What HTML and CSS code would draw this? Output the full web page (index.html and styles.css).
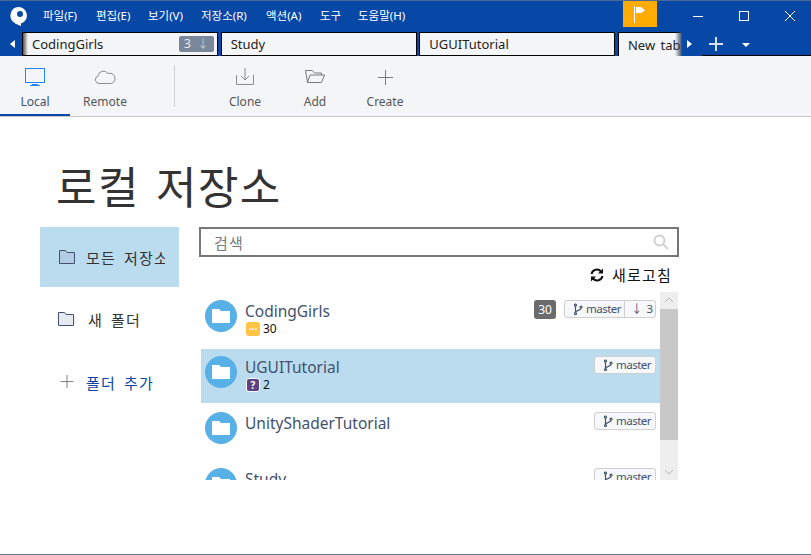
FILE: index.html
```html
<!DOCTYPE html>
<html lang="ko">
<head>
    <meta charset="UTF-8">
    <title>Sourcetree</title>
    <link rel="stylesheet" href="styles.css">
</head>
<body>
    <div class="app">
        <header class="titlebar">
            <svg class="logo" viewBox="0 0 18 19">
                <path fill="#fff" fill-rule="evenodd" d="M8.500 0a8.500 8.500 0 0 1 2.500 16.600V19L5 16.500V16A8.500 8.500 0 0 1 8.500 0zM10 4a3 3 0 1 0 0 6a3 3 0 0 0 0-6z"/>
            </svg>
            <nav class="menu">
                <span class="menu-item w53">파일(F)</span>
                <span class="menu-item w52">편집(E)</span>
                <span class="menu-item w53">보기(V)</span>
                <span class="menu-item w65">저장소(R)</span>
                <span class="menu-item w54">액션(A)</span>
                <span class="menu-item w38">도구</span>
                <span class="menu-item">도움말(H)</span>
            </nav>
            <div class="flag">
                <svg width="14" height="18" viewBox="0 0 14 18">
                    <path stroke="#fff" d="M1.500 1v17"/>
                    <path fill="#fff" d="M3 2h5l4 3.500L8 8H3z"/>
                </svg>
            </div>
            <div class="win-controls">
                <button class="win-btn"><svg width="12" height="12" viewBox="0 0 12 12"><path stroke="#fff" d="M1 6.500h10"/></svg></button>
                <button class="win-btn"><svg width="12" height="12" viewBox="0 0 12 12"><rect x="1.500" y="1.500" width="9" height="9" fill="none" stroke="#fff"/></svg></button>
                <button class="win-btn"><svg width="12" height="12" viewBox="0 0 12 12"><path stroke="#fff" d="M1 1l10 10M11 1L1 11"/></svg></button>
            </div>
        </header>

        <div class="tabbar">
            <div class="tab-arrow tab-arrow-left"></div>
            <div class="tabs">
                <div class="tab">
                    <span class="tab-name">CodingGirls</span>
                    <span class="tab-badge">3 <span class="tab-badge-arrow">↓</span></span>
                </div>
                <div class="tab"><span class="tab-name">Study</span></div>
                <div class="tab"><span class="tab-name">UGUITutorial</span></div>
                <div class="tab tab-active"><span class="tab-name">New tab</span></div>
                <div class="tabs-fade"></div>
            </div>
            <div class="tab-arrow tab-arrow-right"></div>
            <div class="tab-tools">
                <svg width="16" height="16" viewBox="0 0 16 16"><path stroke="#d5e0f0" stroke-width="2" d="M8 1v14M1 8h14"/></svg>
                <span class="tab-caret"></span>
            </div>
        </div>

        <div class="toolbar">
            <div class="tool tool-active">
                <svg width="22" height="20" viewBox="0 0 22 20" fill="none" stroke="#2684ff">
                    <rect x="1.500" y="1.500" width="19" height="14"/>
                    <path d="M8 17.500h6M6 18.500h10"/>
                </svg>
                <span>Local</span>
            </div>
            <div class="tool">
                <svg width="22" height="20" viewBox="0 0 22 20" fill="none" stroke="#8c8c8c">
                    <path d="M5 16.500a3.800 3.800 0 0 1-1-7.400A5.500 5.500 0 0 1 14 6.500a4.500 4.500 0 0 1 3.500 10z"/>
                </svg>
                <span>Remote</span>
            </div>
            <div class="tool-sep"></div>
            <div class="tool">
                <svg width="22" height="20" viewBox="0 0 22 20" fill="none" stroke="#8c8c8c">
                    <path d="M2.500 8v9.500h17V8M11 1v12M7 9l4 4 4-4"/>
                </svg>
                <span>Clone</span>
            </div>
            <div class="tool">
                <svg width="22" height="20" viewBox="0 0 22 20" fill="none" stroke="#7a7a7a">
                    <path d="M3.500 15.500L1.500 3.500h7l2 2.500h7v2M3.500 15.500h14l3-7.500H6z"/>
                </svg>
                <span>Add</span>
            </div>
            <div class="tool">
                <svg width="22" height="20" viewBox="0 0 22 20" fill="none" stroke="#7a7a7a">
                    <path d="M11.500 3v15M4 10.500h15"/>
                </svg>
                <span>Create</span>
            </div>
        </div>

        <main class="content">
            <h1 class="page-title">로컬 저장소</h1>
            <div class="columns">
                <aside class="sidebar">
                    <div class="side-item side-selected">
                        <svg class="side-icon" viewBox="0 0 16 14"><path fill="#b0cde4" stroke="#42526e" d="M.500 13.500V.500h6l1.500 2h7.500v11z"/></svg>
                        <span class="side-label">모든 저장소</span>
                    </div>
                    <div class="side-item side-new">
                        <svg class="side-icon" viewBox="0 0 16 14"><path fill="#e6e9f1" stroke="#42526e" d="M.500 13.500V.500h6l1.500 2h7.500v11z"/></svg>
                        <span class="side-label">새 폴더</span>
                    </div>
                    <div class="side-item side-add">
                        <svg class="side-icon" viewBox="0 0 16 16"><path stroke="#707070" d="M8 0v15M.5 7.500h15"/></svg>
                        <span class="side-label">폴더 추가</span>
                    </div>
                </aside>

                <section class="repos">
                    <div class="search">
                        <span class="search-text">검색</span>
                        <svg width="16" height="16" viewBox="0 0 16 16" fill="none" stroke="#d0d0d0" stroke-width="2">
                            <circle cx="6.500" cy="6.500" r="5"/>
                            <path d="M10 10l5 5"/>
                        </svg>
                    </div>
                    <div class="refresh">
                        <svg width="14" height="14" viewBox="0 0 14 14" fill="none" stroke="#111" stroke-width="2">
                            <path d="M1.500 6A5.500 5.500 0 0 1 11 3.500M12.500 8A5.500 5.500 0 0 1 3 10.500"/>
                            <path fill="#111" stroke="none" d="M13 .5v5H8zM1 13.500v-5h5z"/>
                        </svg>
                        <span>새로고침</span>
                    </div>
                    <div class="repo-area">
                        <div class="repo-list">
                            <div class="repo">
                                <div class="repo-circle"><svg width="18" height="14" viewBox="0 0 18 14"><path fill="#fff" d="M0 14V0h7l2 2h9v12z"/></svg></div>
                                <div class="repo-info">
                                    <div class="repo-name">CodingGirls</div>
                                    <div class="repo-status"><span class="st st-pending">···</span>30</div>
                                </div>
                                <span class="count">30</span>
                                <span class="branch branch-wide">
                                    <svg class="branch-icon" viewBox="0 0 10 12" fill="none" stroke="#42526e" stroke-width="1.200"><circle cx="2.500" cy="2" r="1"/><circle cx="2.500" cy="10.500" r="1"/><circle cx="8" cy="4" r="1"/><path d="M2.500 3v6.500M8 5c0 2.500-4 2-5.500 4"/></svg>
                                    master
                                    <span class="branch-behind">↓ 3</span>
                                </span>
                            </div>
                            <div class="repo repo-selected">
                                <div class="repo-circle"><svg width="18" height="14" viewBox="0 0 18 14"><path fill="#fff" d="M0 14V0h7l2 2h9v12z"/></svg></div>
                                <div class="repo-info">
                                    <div class="repo-name">UGUITutorial</div>
                                    <div class="repo-status"><span class="st st-unknown">?</span>2</div>
                                </div>
                                <span class="branch">
                                    <svg class="branch-icon" viewBox="0 0 10 12" fill="none" stroke="#42526e" stroke-width="1.200"><circle cx="2.500" cy="2" r="1"/><circle cx="2.500" cy="10.500" r="1"/><circle cx="8" cy="4" r="1"/><path d="M2.500 3v6.500M8 5c0 2.500-4 2-5.500 4"/></svg>
                                    master
                                </span>
                            </div>
                            <div class="repo">
                                <div class="repo-circle"><svg width="18" height="14" viewBox="0 0 18 14"><path fill="#fff" d="M0 14V0h7l2 2h9v12z"/></svg></div>
                                <div class="repo-info">
                                    <div class="repo-name">UnityShaderTutorial</div>
                                </div>
                                <span class="branch">
                                    <svg class="branch-icon" viewBox="0 0 10 12" fill="none" stroke="#42526e" stroke-width="1.200"><circle cx="2.500" cy="2" r="1"/><circle cx="2.500" cy="10.500" r="1"/><circle cx="8" cy="4" r="1"/><path d="M2.500 3v6.500M8 5c0 2.500-4 2-5.500 4"/></svg>
                                    master
                                </span>
                            </div>
                            <div class="repo">
                                <div class="repo-circle"><svg width="18" height="14" viewBox="0 0 18 14"><path fill="#fff" d="M0 14V0h7l2 2h9v12z"/></svg></div>
                                <div class="repo-info">
                                    <div class="repo-name">Study</div>
                                </div>
                                <span class="branch">
                                    <svg class="branch-icon" viewBox="0 0 10 12" fill="none" stroke="#42526e" stroke-width="1.200"><circle cx="2.500" cy="2" r="1"/><circle cx="2.500" cy="10.500" r="1"/><circle cx="8" cy="4" r="1"/><path d="M2.500 3v6.500M8 5c0 2.500-4 2-5.500 4"/></svg>
                                    master
                                </span>
                            </div>
                        </div>
                        <div class="scrollbar">
                            <svg class="scroll-btn" viewBox="0 0 18 17" fill="none" stroke="#b5b5b5"><path d="M5 10l4-4 4 4"/></svg>
                            <div class="scroll-thumb"></div>
                            <svg class="scroll-btn scroll-btn-down" viewBox="0 0 18 17" fill="none" stroke="#b5b5b5"><path d="M5 7l4 4 4-4"/></svg>
                        </div>
                    </div>
                </section>
            </div>
        </main>
    </div>
</body>
</html>
```

FILE: styles.css
```css
* {
    margin: 0;
    padding: 0;
    box-sizing: border-box;
}

body {
    font-family: 'Noto Sans', 'Noto Sans CJK KR', sans-serif;
    background: #FFFFFF;
    color: #333333;
    overflow: hidden;
}

.app {
    width: 811px;
    height: 555px;
    display: flex;
    flex-direction: column;
    border-bottom: 1px solid #5B7A94;
    overflow: hidden;
}

/* Title bar */
.titlebar {
    height: 32px;
    flex: none;
    display: flex;
    background: #0747A6;
    border-top: 1px solid #4A6A94;
}

.logo {
    width: 18px;
    height: 19px;
    flex: none;
    margin: 6px 0 0 10px;
}

.menu {
    display: flex;
    flex: none;
    margin-left: 15px;
    width: 580px;
    color: #FFFFFF;
    font-size: 11.500px;
    line-height: 29px;
}

.menu-item {
    white-space: nowrap;
}

.w53 { width: 53px; }
.w52 { width: 52px; }
.w65 { width: 65px; }
.w54 { width: 54px; }
.w38 { width: 38px; }

.flag {
    width: 34px;
    height: 26px;
    flex: none;
    background: #FFAB00;
    display: flex;
    justify-content: center;
    padding-top: 4px;
}

.win-controls {
    display: flex;
    flex: none;
    margin-left: 18px;
}

.win-btn {
    width: 46px;
    height: 31px;
    border: none;
    background: none;
    display: flex;
    align-items: center;
    justify-content: center;
    padding-bottom: 2px;
}

/* Tabs */
.tabbar {
    height: 24px;
    flex: none;
    display: flex;
    background: #0747A6;
}

.tab-arrow {
    width: 0;
    height: 0;
    margin-top: 8px;
    border-top: 4px solid transparent;
    border-bottom: 4px solid transparent;
}

.tab-arrow-left {
    margin-left: 10px;
    border-right: 5px solid #FFFFFF;
}

.tab-arrow-right {
    margin-left: 5px;
    border-left: 5px solid #FFFFFF;
}

.tabs {
    width: 660px;
    margin-left: 7px;
    display: flex;
    gap: 2.670px;
    overflow: hidden;
    position: relative;
}

/* scroll shadow where the last tab runs under the arrow */
.tabs-fade {
    position: absolute;
    top: 0;
    right: 0;
    width: 7px;
    height: 24px;
    background: linear-gradient(90deg, rgba(7, 71, 166, 0), #3A4A66);
}

.tab {
    width: 196px;
    height: 24px;
    flex: none;
    display: flex;
    align-items: center;
    justify-content: space-between;
    padding: 0 3px 0 9px;
    background: #F4F5F7;
    border: 1px solid #000000;
    font-size: 13px;
    color: #222222;
}

.tab:first-child {
    background: linear-gradient(90deg, #555555, #F4F5F7 5px);
}

.tab-active {
    border-bottom: none;
    background: #F4F5F7;
}

.tab-name {
    white-space: nowrap;
    word-spacing: 2px;
}

.tab-badge {
    background: #7A869A;
    color: #E8EAEE;
    font-size: 12px;
    line-height: 16px;
    height: 16px;
    padding: 0 5px;
    border-radius: 2px;
    word-spacing: 3px;
}

.tab-badge-arrow {
    color: #C1C7D0;
}

.tab-tools {
    flex: 1;
    display: flex;
    align-items: center;
    gap: 18px;
    margin-left: 10px;
    padding-left: 6px;
    border-bottom: 1px solid #000000;
}

.tab-caret {
    width: 0;
    height: 0;
    margin-top: 2px;
    border-left: 4px solid transparent;
    border-right: 4px solid transparent;
    border-top: 4px solid #FFFFFF;
}

/* Toolbar */
.toolbar {
    height: 61px;
    flex: none;
    display: flex;
    background: #F4F5F7;
    border-bottom: 1px solid #C8C8C8;
}

.tool {
    width: 70px;
    height: 60px;
    display: flex;
    flex-direction: column;
    align-items: center;
    padding-top: 11px;
    gap: 6px;
    font-size: 12px;
    color: #555555;
}

.tool span {
    line-height: 18px;
}

.tool-active {
    color: #42526E;
    border-bottom: 2px solid #0747A6;
}

.tool-sep {
    width: 1px;
    height: 42px;
    margin: 9px 35px 0 34px;
    background: #D0D0D0;
}

/* Main area */
.content {
    flex: 1;
    padding: 0 0 0 40px;
    min-height: 0;
}

.page-title {
    height: 110px;
    padding: 40px 0 0 16px;
    font-size: 44px;
    line-height: 60px;
    font-weight: 400;
    letter-spacing: 1.500px;
    word-spacing: 3px;
    color: #333333;
}

.columns {
    display: flex;
    gap: 20px;
}

.sidebar {
    width: 139px;
    flex: none;
    font-size: 15px;
}

.side-item {
    height: 60px;
    margin-bottom: 3px;
    display: flex;
    align-items: center;
    gap: 11px;
    padding: 0 14px 0 19px;
    white-space: nowrap;
}

.side-selected {
    background: #BBDCEE;
}

.side-new {
    padding: 0 14px 2px 18px;
    gap: 14px;
}

.side-add {
    color: #0747A6;
    padding-bottom: 2px;
}

.side-icon {
    width: 16px;
    height: 14px;
    flex: none;
}

.side-label {
    min-width: 0;
    overflow: hidden;
    letter-spacing: 1.200px;
    word-spacing: 3px;
}

.repos {
    width: 480px;
    flex: none;
}

.search {
    height: 30px;
    border: 2px solid #777777;
    display: flex;
    align-items: center;
    justify-content: space-between;
    padding: 0 8px 0 13px;
    font-size: 15px;
    letter-spacing: 1.200px;
    color: #7A7A7A;
}

.refresh {
    height: 35px;
    display: flex;
    align-items: center;
    justify-content: flex-end;
    gap: 8px;
    padding-right: 7px;
    font-size: 15px;
    letter-spacing: 1.200px;
    color: #111111;
}

.repo-area {
    height: 188px;
    display: flex;
    overflow: hidden;
}

.repo-list {
    width: 459px;
    margin-left: 2px;
    padding-top: 1px;
}

.repo {
    height: 54px;
    margin-bottom: 2px;
    display: flex;
    align-items: flex-start;
    padding: 7px 4px 0 4px;
}

.repo-selected {
    background: #BBDCEE;
}

.repo-circle {
    width: 32px;
    height: 32px;
    flex: none;
    border-radius: 50%;
    background: #57B0E6;
    display: flex;
    align-items: center;
    justify-content: center;
}

.repo-info {
    flex: 1;
    margin-left: 8px;
}

.repo-name {
    font-size: 15.500px;
    line-height: 22px;
    color: #42526E;
}

.repo-status {
    display: flex;
    align-items: center;
    gap: 3px;
    padding-left: 1px;
    font-size: 12px;
    line-height: 14px;
    color: #111111;
}

.st {
    width: 14px;
    height: 14px;
    border-radius: 3px;
    display: flex;
    align-items: center;
    justify-content: center;
    font-size: 10px;
    font-weight: 700;
    color: #FFFFFF;
}

.st-pending {
    background: #FFC345;
}

.st-unknown {
    background: #5D4480;
    border: 1px solid #FFFFFF;
}

.count {
    width: 22px;
    height: 19px;
    margin-right: 8px;
    text-align: center;
    background: #6B6B6B;
    color: #FFFFFF;
    border-radius: 3px;
    font-size: 12px;
    line-height: 19px;
}

.branch {
    width: 62px;
    height: 18px;
    display: flex;
    align-items: center;
    gap: 3px;
    padding: 0 0 1px 8px;
    background: #F7F8F9;
    border: 1px solid #CFCFCF;
    border-radius: 3px;
    font-size: 11.500px;
    letter-spacing: -0.500px;
    color: #42526E;
}

.branch-wide {
    width: 92px;
}

.branch-icon {
    width: 10px;
    height: 12px;
    flex: none;
}

.branch-behind {
    padding-left: 6px;
    border-left: 1px solid #CFCFCF;
    line-height: 16px;
    letter-spacing: 0;
    word-spacing: 1px;
    white-space: nowrap;
}

.scrollbar {
    width: 18px;
    height: 188px;
    flex: none;
    background: #EEEEEE;
    display: flex;
    flex-direction: column;
}

.scroll-btn {
    width: 18px;
    height: 17px;
    flex: none;
}

.scroll-btn-down {
    margin-top: 23px;
}

.scroll-thumb {
    height: 131px;
    flex: none;
    background: #C8C8C8;
}
```
